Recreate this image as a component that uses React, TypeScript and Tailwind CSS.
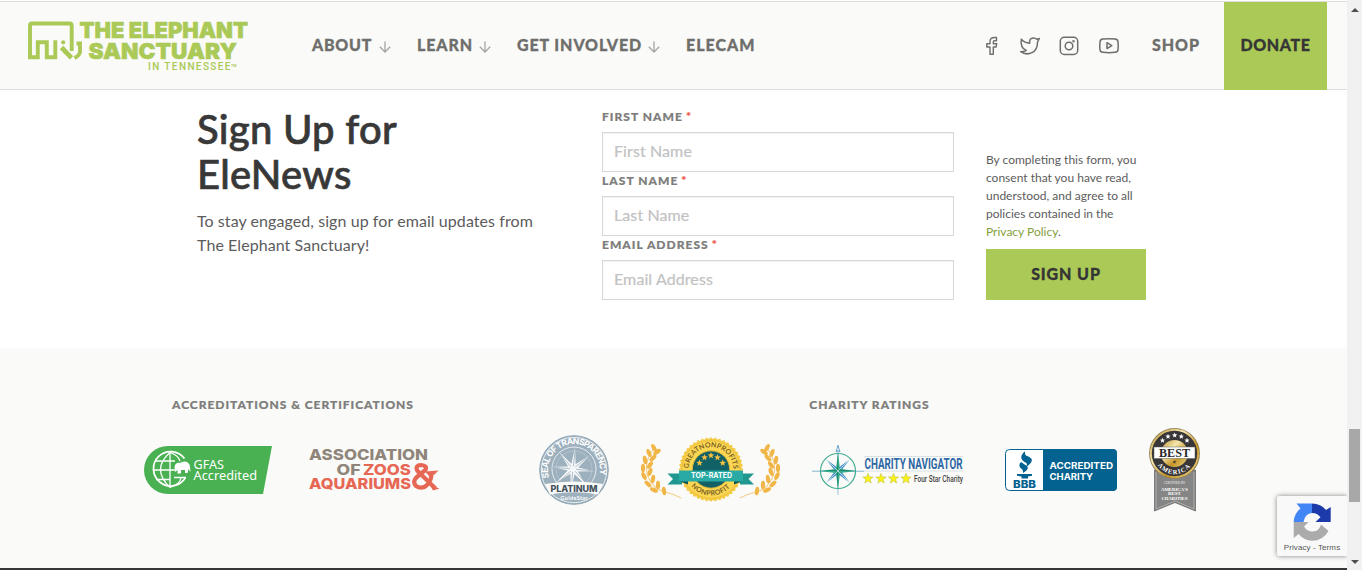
import type { ReactNode } from "react";

const lato = "Lato, sans-serif";
const inter = "Inter, sans-serif";

function starPath(cx: number, cy: number, outer: number, inner: number, points: number, turn = 0) {
  let d = "";
  for (let i = 0; i < points * 2; i++) {
    const r = i % 2 === 0 ? outer : inner;
    const a = (Math.PI * i) / points - Math.PI / 2 + turn;
    d += `${i ? "L" : "M"}${(cx + r * Math.cos(a)).toFixed(2)} ${(cy + r * Math.sin(a)).toFixed(2)}`;
  }
  return d + "Z";
}

function SiteLogo() {
  return (
    <svg width="222" height="54" viewBox="27 19 222 54" className="block" fill="#aac957">
      <g fill="none" stroke="#aac957" strokeWidth="3.900">
        <path d="M30 57.3V25.5Q30 23.5 32 23.5H69.700Q71.700 23.500 71.700 25.500V51" />
        <path d="M28 57.200H37.800V42.200H46.800V57.200H55.300V40.300" />
        <path d="M61.500 47.500L71.500 57.800" strokeWidth="4.800" />
        <path d="M76.500 43.500H80V52Q79.500 55.500 74.500 58" />
      </g>
      <circle cx="63.200" cy="42.300" r="2.100" />
      <g fontFamily={inter} fontWeight="900" stroke="#aac957" strokeWidth=".5" fontSize="22">
        <text x="79.500" y="37.900" textLength="168.500" lengthAdjust="spacingAndGlyphs">THE ELEPHANT</text>
        <text x="88.500" y="58.900" textLength="148.500" lengthAdjust="spacingAndGlyphs">SANCTUARY</text>
      </g>
      <text x="148" y="70.400" fontFamily="Roboto, sans-serif" fontWeight="500" fontSize="10" textLength="82.500" lengthAdjust="spacing">IN TENNESSEE</text>
      <text x="231" y="67" fontFamily={inter} fontWeight="600" fontSize="3.500" textLength="5.500">TM</text>
    </svg>
  );
}

function DownArrow() {
  return (
    <svg width="12" height="12" viewBox="0 0 12 12" fill="none" stroke="#a5a5a3" strokeWidth="1.300" className="mt-[2px] block">
      <path d="M6 .5V11M.8 5.800L6 11L11.200 5.800" />
    </svg>
  );
}

function NavItem({ children, className, arrow = true }: { children: ReactNode; className: string; arrow?: boolean }) {
  return (
    <a className="flex items-center">
      <span className={`block whitespace-nowrap pb-[2px] ${className}`}>{children}</span>
      {arrow && <DownArrow />}
    </a>
  );
}

function Header() {
  return (
    <header className="flex h-[90px] flex-col bg-white pt-px">
      <div className="flex h-[89px] items-stretch border-y border-[#dededa] bg-[#fafaf8]">
        <div className="ml-[27px] mt-[17px] w-[285px] shrink-0"><SiteLogo /></div>
        <nav className="flex items-center text-[16px] font-black leading-6 text-[#6e6e6c] [-webkit-text-stroke:0.3px]">
          <NavItem className="w-[67px] tracking-[0.75px]">ABOUT</NavItem>
          <span className="w-[26px]" />
          <NavItem className="w-[62px] tracking-[0.9px]">LEARN</NavItem>
          <span className="w-[26px]" />
          <NavItem className="w-[131px] tracking-[0.9px]">GET INVOLVED</NavItem>
          <span className="w-[26px]" />
          <NavItem className="tracking-[1px]" arrow={false}>ELECAM</NavItem>
        </nav>
        <div className="ml-auto flex items-center">
          <svg width="136" height="22" viewBox="985 35 136 22" fill="none" stroke="#6e6e6c" strokeWidth="1.500" strokeLinejoin="round" strokeLinecap="round" className="mr-[31px] block">
            <path d="M996.500 37.500H994.500Q990 37.500 990 41.500V43.700H986.800V47H990V54.300H993.300V47H996L996.800 43.700H993.300V42Q993.300 40.800 994.500 40.800H996.500Z" strokeWidth="1.400" />
            <path d="M1020.700 51.600Q1024 52 1026.300 50.400Q1020 48 1021.300 39.300Q1024.500 43 1029.700 43.200Q1029 38.300 1033.200 37.900Q1035.300 37.700 1036.800 39.200L1039.300 38.400L1037.500 42.200Q1037.500 50 1032 52.700Q1026 55.500 1020.700 51.600Z" />
            <rect x="1060.300" y="37.300" width="17.400" height="17.200" rx="4" />
            <circle cx="1069" cy="46" r="3.800" />
            <circle cx="1073.500" cy="41.300" r=".5" />
            <path d="M1103 39Q1109 38.300 1115 39Q1118 39.300 1118 42Q1118.500 46 1118 49.500Q1118 52 1115 52.300Q1109 53 1103 52.300Q1100 52 1100 49.500Q1099.500 46 1100 42Q1100 39.300 1103 39Z" />
            <path d="M1107 42.700V48.600L1111.800 45.600Z" />
          </svg>
          <a className="w-[72px] pb-[2px] text-[16px] font-black leading-6 tracking-[0.95px] text-[#6e6e6c] [-webkit-text-stroke:0.3px]">SHOP</a>
        </div>
        <a className="-mb-px mr-5 flex w-[103px] items-center justify-center bg-[#aac957] pb-[2px] text-[16px] font-black leading-6 tracking-[0.55px] text-[#353535] [-webkit-text-stroke:0.3px]">DONATE</a>
      </div>
    </header>
  );
}

function Field({ label, hint }: { label: string; hint: string }) {
  return (
    <label className="flex flex-col">
      <span className="flex h-6 items-start text-[12px] font-black leading-[17px] tracking-[1.03px] text-[#7d7d7b] [-webkit-text-stroke:0.2px]">
        {label}<span className="ml-[3px] font-bold text-[#f2594b]">*</span>
      </span>
      <input
        placeholder={hint}
        className="h-10 w-[352px] border border-[#d8d8d8] bg-white px-[11px] pb-[3px] text-[16px] tracking-[0.1px] text-[#555] shadow-[inset_0_1px_2px_rgba(0,0,0,0.06)] placeholder:text-[#c2c2c2] [-webkit-text-stroke:0.2px]"
      />
    </label>
  );
}

function SignUp() {
  return (
    <section className="flex h-[258px] bg-white pl-[197px]">
      <div className="w-[405px] pt-[17px]">
        <h1 className="text-[40px] font-medium leading-[45px] tracking-[0.25px] text-[#383838] [-webkit-text-stroke:0.7px]">Sign Up for<br />EleNews</h1>
        <p className="mt-[12px] text-[16px] leading-6 tracking-[0.07px] text-[#5c5c5c]">To stay engaged, sign up for email updates from<br />The Elephant Sanctuary!</p>
      </div>
      <form className="flex flex-col pt-[18px]">
        <Field label="FIRST NAME" hint="First Name" />
        <Field label="LAST NAME" hint="Last Name" />
        <Field label="EMAIL ADDRESS" hint="Email Address" />
      </form>
      <div className="ml-8 flex w-40 flex-col pt-[61px]">
        <p className="whitespace-nowrap text-[12px] leading-[18px] text-[#5c5c5c]">
          By completing this form, you<br />consent that you have read,<br />understood, and agree to all<br />policies contained in the<br />
          <a className="text-[#84a03c]">Privacy Policy</a>.
        </p>
        <button className="mt-2 flex h-[51px] items-center justify-center bg-[#aac957] pb-[2px] text-[16px] font-black tracking-[0.9px] text-[#353535] [-webkit-text-stroke:0.3px]">SIGN UP</button>
      </div>
    </section>
  );
}

function GfasLogo() {
  return (
    <svg width="128" height="48" viewBox="144 446 128 48" className="block shrink-0">
      <path d="M168 446H272L263 494H168A24 24 0 0 1 168 446Z" fill="#49b152" />
      <g fill="none" stroke="#fff" strokeWidth="1.700">
        <path d="M184.500 458.500A17.200 17.200 0 1 0 185.500 477.500" />
        <path d="M170 452.500V487.500M152.800 470H176M156 461H175M174 477.500H186M156 479.500H170M170 452.500Q151 469 170 487.500" strokeWidth="1.300" />
        <path d="M170 452.500Q178 455 180 461M170 487.500Q180 484 181 478" strokeWidth="1.300" />
      </g>
      <path d="M174.500 467Q175 462.500 180 462.800L184 461.500Q189.500 461.500 190 467L190.500 472L188.500 469L187.500 473H185V470H181V473.500H177.500V470L175 472Z" fill="#fff" />
      <g fill="#fff" fontFamily="Noto Sans, sans-serif" fontSize="12">
        <text x="193.500" y="469" textLength="30.500" lengthAdjust="spacingAndGlyphs">GFAS</text>
        <text x="193.500" y="480" textLength="63.500" lengthAdjust="spacingAndGlyphs">Accredited</text>
      </g>
    </svg>
  );
}

function AzaLogo() {
  return (
    <svg width="131" height="46" viewBox="309 446 131 46" className="block shrink-0">
      <g fontFamily={inter} fontWeight="800" fontSize="15" fill="#8f857b">
        <text x="309" y="459.300" textLength="119" lengthAdjust="spacingAndGlyphs">ASSOCIATION</text>
        <text x="336.500" y="473.500" textLength="24" lengthAdjust="spacingAndGlyphs">OF</text>
        <text x="363" y="473.500" fill="#e76755" textLength="48" lengthAdjust="spacingAndGlyphs">ZOOS</text>
        <text x="309" y="487.700" fill="#e76755" textLength="102" lengthAdjust="spacingAndGlyphs">AQUARIUMS</text>
      </g>
      <path d="M435.500 487.500L417.500 470Q414.500 464.500 421 464Q427.500 464.500 425.500 469L418 475Q411.500 480 416 485Q422 489 427.500 483.500Q431.500 479.500 431.500 472" fill="none" stroke="#e76755" strokeWidth="4.200" />
      <path d="M425 470.500L438.500 469.500L434.500 473.500L429 475ZM430 484L439.500 487.500L433 489.500Z" fill="#e76755" />
    </svg>
  );
}

function GuideStarSeal() {
  return (
    <svg width="70" height="70" viewBox="539 435 70 70" className="block shrink-0">
      <defs><path id="seal-top" d="M549.400 478.500A26 26 0 1 1 598.600 478.500" /></defs>
      <circle cx="574" cy="470" r="34.300" fill="#9db0be" stroke="#8fa5b5" />
      <circle cx="574" cy="470" r="32.700" fill="none" stroke="#fafaf8" strokeWidth=".8" />
      <circle cx="574" cy="469" r="22" fill="#9db0be" stroke="#e8edf0" strokeWidth="1" />
      <circle cx="574" cy="469" r="18" fill="none" stroke="#c3d0d9" strokeWidth=".6" />
      <path d={starPath(573, 469, 21.5, 5.500, 8, 0.1)} fill="#f5f7f8" />
      <path d="M573 469L575.500 448M573 469L589.500 455.500M573 469L594 471M573 469L587.500 485M573 469L571 490M573 469L557.500 483M573 469L552 467M573 469L559 453" stroke="#9db0be" strokeWidth=".8" />
      <circle cx="573" cy="469" r="3" fill="#f5f7f8" />
      <text fontFamily={inter} fontWeight="700" fontSize="8.500" fill="#fff"><textPath href="#seal-top" startOffset="1" textLength="94">SEAL OF TRANSPARENCY</textPath></text>
      <path d="M545 484Q574 479 603 484L598 494.500Q574 490 550 494.500Z" fill="#fafaf8" />
      <text x="550.500" y="491.700" fontFamily={inter} fontWeight="800" fontSize="9" fill="#42515d" textLength="47">PLATINUM</text>
      <text x="560.500" y="500" fontFamily={lato} fontWeight="700" fontSize="5.500" fill="#fff" textLength="27">GuideStar</text>
    </svg>
  );
}

function Laurel() {
  const leaves = [
    [654, 448, -30], [649, 453, -22], [645, 460, -10], [643, 468, 0], [644, 476, -25], [648, 484, -45], [654, 490, -65],
    [657, 452, 55], [653, 458, 45], [650, 465, 35], [650, 472, 20], [653, 479, 10], [658, 485, 0], [664, 491, -8],
  ];
  return (
    <g fill="#f1b648">
      <path d="M655 447Q640 466 651 482Q656 490 665 492T681 498" fill="none" stroke="#f3cd8a" strokeWidth="1.100" />
      {leaves.map(([x, y, a]) => <ellipse key={`${x}-${y}`} cx={x} cy={y} rx="2.100" ry="4.300" transform={`rotate(${a} ${x} ${y})`} />)}
    </g>
  );
}

function NonprofitBadge() {
  return (
    <svg width="139" height="66" viewBox="641 437 139 66" className="block shrink-0">
      <defs>
        <path id="badge-top" d="M688.700 469.500A22.300 22.300 0 0 1 733.300 469.500" />
        <path id="badge-bottom" d="M690.500 485.500A26 26 0 0 0 731.500 485.500" />
      </defs>
      <Laurel />
      <g transform="translate(1421 0) scale(-1 1)"><Laurel /></g>
      <path d={starPath(711, 469.500, 32.300, 30.500, 44)} fill="#f4cb45" />
      <circle cx="711" cy="469.500" r="28.700" fill="#fbd752" stroke="#e7b93c" strokeWidth=".6" />
      <circle cx="711" cy="469.500" r="18.700" fill="#126166" stroke="#e5b838" />
      <text fontFamily={lato} fontWeight="700" fontSize="7" fill="#7c6224"><textPath href="#badge-top" startOffset="1" textLength="68">GREATNONPROFITS</textPath></text>
      <text fontFamily={lato} fontWeight="700" fontSize="7" fill="#7c6224"><textPath href="#badge-bottom" startOffset="1" textLength="44">NONPROFIT</textPath></text>
      {[[699.500, 463], [704.500, 457.500], [711, 455.500], [717.500, 457.500], [722.700, 463]].map(([x, y]) => <path key={x} d={starPath(x, y, 3.400, 1.500, 5)} fill="#f5bf42" />)}
      <path d="M667.500 473.500H682V484.500H667.500L673 479ZM754 473.500H740V484.500H754L748.500 479Z" fill="#209890" />
      <path d="M679 481H688V484.500ZM743 481H734V484.500Z" fill="#0b5558" />
      <path d="M679 470.500H743V481.500H679Z" fill="#2aaaa5" />
      <text x="691" y="478" fontFamily={inter} fontWeight="700" fontSize="7" fill="#fff" textLength="41">TOP-RATED</text>
    </svg>
  );
}

function CharityNavigator() {
  return (
    <svg width="161" height="52" viewBox="812 444 161 52" className="block shrink-0">
      <path d="M812 471H963M864 456.500H963" stroke="#cfdbe2" strokeWidth=".8" />
      <path d="M838 445V495M812 471.300H864" stroke="#7fb5d0" strokeWidth=".8" />
      <circle cx="838" cy="471" r="17.500" fill="none" stroke="#43ad91" strokeWidth="1.200" />
      <path d={starPath(838, 471, 17, 3, 4, Math.PI / 4)} fill="#4d97c8" />
      <path d={starPath(838, 471, 19, 2.800, 4)} fill="#35ab8c" />
      <path d="M838 453V489L836.500 473ZM820 471H856L840 469.500Z" fill="#1d8a70" />
      <path d="M826 459L850 483M850 459L826 483" stroke="#e3f1f4" strokeWidth=".7" />
      <path d="M838 445.500L836 452L838 450.500L840 452Z" fill="#fff" stroke="#4d8fc0" strokeWidth=".8" />
      <text x="864.500" y="469.300" fontFamily="Roboto, sans-serif" fontWeight="700" fontSize="15" fill="#2d67a4" textLength="98" lengthAdjust="spacingAndGlyphs">CHARITY NAVIGATOR</text>
      {[868, 881, 893.500, 906].map((x) => <path key={x} d={starPath(x, 478.700, 5.400, 2.200, 5)} fill="#faf414" stroke="#b9b72b" strokeWidth=".5" />)}
      <text x="914" y="481.700" fontFamily="Roboto, sans-serif" fontWeight="500" fontSize="9" fill="#454545" textLength="49" lengthAdjust="spacingAndGlyphs">Four Star Charity</text>
    </svg>
  );
}

function BbbLogo() {
  return (
    <svg width="112" height="42" viewBox="1005 449 112 42" className="block shrink-0">
      <rect x="1005.500" y="449.500" width="111" height="41" rx="4" fill="#fff" stroke="#03628f" />
      <path d="M1043 449H1113Q1117 449 1117 453V487Q1117 491 1113 491H1043Z" fill="#03628f" />
      <path d="M1025 451.500Q1021 454 1021.300 458Q1022 461 1026.500 463Q1027.500 465 1026 467Q1033 462.500 1031.700 459Q1030 456.500 1026 455.500Q1024.500 454 1025 451.500ZM1021 462Q1018 465 1020.500 468Q1023.500 469.500 1023 473Q1029 469.500 1027.500 466.500Z" fill="#03628f" />
      <path d="M1017 474H1032V475.700L1028 476.500V478.500H1021.500V476.500L1017 475.700Z" fill="#03628f" />
      <text x="1013" y="487.800" fontFamily={inter} fontWeight="800" fontSize="10.500" fill="#03628f" textLength="23" lengthAdjust="spacingAndGlyphs">BBB</text>
      <g fill="#fff" fontFamily={inter} fontWeight="700" fontSize="9">
        <text x="1049.500" y="469" textLength="63.500" lengthAdjust="spacingAndGlyphs">ACCREDITED</text>
        <text x="1049.500" y="480" textLength="43.500" lengthAdjust="spacingAndGlyphs">CHARITY</text>
      </g>
    </svg>
  );
}

function BestSeal() {
  return (
    <svg width="51" height="84" viewBox="1149 428 51 84" className="block shrink-0">
      <defs>
        <path id="best-arc" d="M1156 462.500A20.500 20.500 0 0 0 1193 462.500" />
        <linearGradient id="gold" x1="0" x2="1" y1="0" y2="1">
          <stop stopColor="#b98d2b" /><stop offset=".35" stopColor="#f6e7ae" /><stop offset=".65" stopColor="#c59527" /><stop offset="1" stopColor="#efd98f" />
        </linearGradient>
      </defs>
      <path d="M1154.500 470H1195.500V511L1175 502.500L1154.500 511Z" fill="#858585" stroke="#5b5b5b" strokeWidth=".7" />
      <path d="M1156 472V509L1175 501L1194 509V472" fill="none" stroke="#c9c9c9" strokeWidth=".6" />
      <circle cx="1174.500" cy="453.500" r="25.200" fill="#383636" stroke="#b3a271" strokeWidth=".6" />
      <circle cx="1174.500" cy="453.500" r="23.700" fill="none" stroke="url(#gold)" strokeWidth="2" />
      <circle cx="1174.500" cy="453.500" r="13.500" fill="url(#gold)" />
      {[[1162.500, 440.500], [1168, 436.500], [1174.700, 435.300], [1181.300, 436.500], [1187, 440.500]].map(([x, y]) => <path key={x} d={starPath(x, y, 2.800, 1.200, 5)} fill="#fff" />)}
      <path d="M1154 447H1195V458.500H1154Z" fill="#fff" stroke="#5b5b5b" strokeWidth=".5" />
      <path d={starPath(1174.500, 462, 1.800, .8, 5)} fill="#383636" />
      <g fontFamily="Liberation Serif, serif" fontWeight="700">
        <text x="1159" y="457" fontSize="12.500" fill="#292929" textLength="31" lengthAdjust="spacingAndGlyphs">BEST</text>
        <text fontSize="6.500" fill="#fff"><textPath href="#best-arc" startOffset="3" textLength="38">AMERICA</textPath></text>
        <g fill="#fff" fontSize="5" textAnchor="middle">
          <text x="1174.500" y="484" fontSize="3" fillOpacity=".7" textLength="21" lengthAdjust="spacingAndGlyphs">CERTIFIED BY</text>
          <text x="1174.500" y="490.500" textLength="27" lengthAdjust="spacingAndGlyphs">AMERICA'S</text>
          <text x="1174.500" y="495.300">BEST</text>
          <text x="1174.500" y="500.200" textLength="26" lengthAdjust="spacingAndGlyphs">CHARITIES</text>
        </g>
      </g>
    </svg>
  );
}

function Ratings() {
  const title = "text-center text-[12px] font-black leading-[18px] text-[#7d7d7b] [-webkit-text-stroke:0.2px]";
  return (
    <section className="flex h-[220px] bg-[#fafaf8] pl-[144px] pt-12">
      <div className="flex w-[296px] flex-col">
        <h2 className={`${title} pl-[2px] tracking-[0.97px]`}>ACCREDITATIONS &amp; CERTIFICATIONS</h2>
        <div className="mt-[14px] flex h-[84px] items-center justify-between"><GfasLogo /><AzaLogo /></div>
      </div>
      <div className="ml-[99px] flex w-[661px] flex-col">
        <h2 className={`${title} tracking-[1px]`}>CHARITY RATINGS</h2>
        <div className="mt-[14px] flex h-[84px] items-center gap-8">
          <GuideStarSeal /><NonprofitBadge /><CharityNavigator /><BbbLogo /><BestSeal />
        </div>
      </div>
    </section>
  );
}

function Recaptcha() {
  return (
    <div className="absolute bottom-[14px] right-0 flex h-[60px] w-[70px] flex-col items-center rounded-l-[2px] bg-[#f9f9f9] pt-[6px] shadow-[0_0_5px_#808080]">
      <svg width="40" height="40" viewBox="1292 501 40 40" className="block">
        <path d="M1312 502.500Q1321 502.500 1326 509L1330.700 506V521H1315.500L1320.500 516.300Q1317.500 512 1312 512Z" fill="#1c3aa9" />
        <path d="M1312 502.500V512Q1305 512.500 1303.500 521H1293.700Q1294 512.500 1300.500 507.500L1296.500 502.500Z" fill="#4285f4" />
        <path d="M1293.700 521H1308.500L1304 525.500Q1307 530.500 1312.500 530.500Q1319.500 530 1321 523.500L1328.500 530Q1323 539.800 1312 539.800Q1304 539.500 1298.500 533L1293.700 537Z" fill="#ababab" />
      </svg>
      <span className="mt-px whitespace-nowrap font-['Liberation_Sans'] text-[8px] leading-[10px] tracking-[0.1px] text-[#555]">Privacy - Terms</span>
    </div>
  );
}

export default function App() {
  return (
    <div className="flex h-[570px] w-[1362px] overflow-hidden bg-white font-['Lato',sans-serif]">
      <main className="relative flex w-[1347px] flex-col overflow-hidden">
        <Header />
        <SignUp />
        <Ratings />
        <div className="h-[2px] bg-[#383838]" />
        <Recaptcha />
      </main>
      <aside className="flex w-[15px] flex-col items-center bg-[#f1f1f1]">
        <svg width="8" height="4" viewBox="0 0 8 4" className="mt-2 block"><path d="M4 0L8 4H0Z" fill="#505050" /></svg>
        <div className="mt-[417px] h-[73px] w-[11px] bg-[#a8a8a8]" />
        <svg width="8" height="4" viewBox="0 0 8 4" className="mt-[58px] block"><path d="M0 0H8L4 4Z" fill="#505050" /></svg>
      </aside>
    </div>
  );
}
